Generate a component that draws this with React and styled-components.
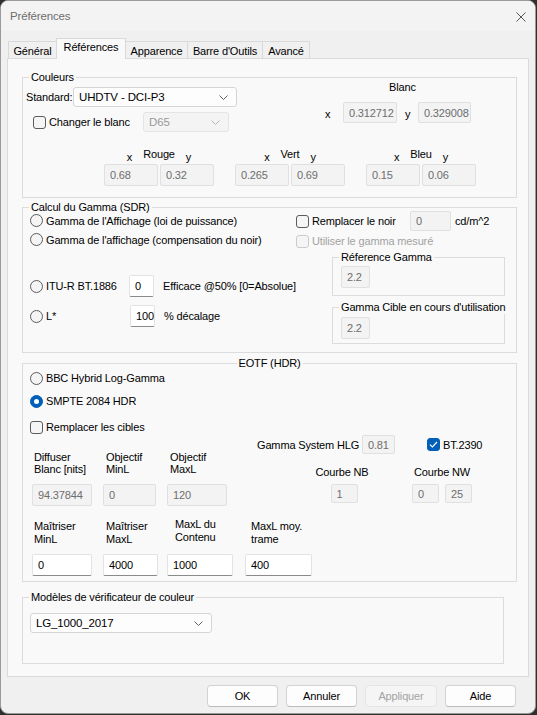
import React from 'react';
import styled, { createGlobalStyle, css } from 'styled-components';

const GlobalStyle = createGlobalStyle`
  html, body {
    margin: 0;
    padding: 0;
    background: #2f2f2f;
  }
  body {
    font-family: 'Liberation Sans', Arial, sans-serif;
    font-size: 11px;
    letter-spacing: -0.15px;
    color: #000;
  }
  * { box-sizing: border-box; }
`;

const Window = styled.div`
  width: 536px;
  height: 714px;
  background: #f0f0f0;
  border: 1px solid #9a9a9a;
  border-radius: 8px;
  overflow: hidden;
  display: flex;
  flex-direction: column;
`;

const TitleBar = styled.div`
  height: 30px;
  background: #f3f3f3;
  display: flex;
  align-items: center;
  justify-content: space-between;
  padding: 0 9px 0 9px;
`;

const Title = styled.span`
  font-size: 11.5px;
  color: #6e6e6e;
`;

const CloseBtn = styled.span`
  width: 10px;
  height: 10px;
  display: flex;
  margin-top: 1px;
`;

const TabStrip = styled.div`
  height: 27px;
  padding-left: 8px;
  display: flex;
  align-items: flex-end;
`;

const Tab = styled.div`
  width: ${p => p.$w}px;
  height: 17px;
  border: 1px solid #d9d9d9;
  border-bottom: none;
  margin-left: -1px;
  background: #f0f0f0;
  display: flex;
  align-items: center;
  justify-content: center;
  padding-top: 1px;
  ${p => p.$active && css`
    height: 21px;
    margin-bottom: -1px;
    background: #f9f9f9;
    position: relative;
    z-index: 2;
    padding-top: 0;
    padding-bottom: 4px;
  `}
`;

const Panel = styled.div`
  margin-left: 6px;
  width: 522px;
  height: 619px;
  background: #f9f9f9;
  border: 1px solid #dadada;
  padding: 18px 0 0 14px;
`;

const Group = styled.div`
  position: relative;
  width: ${p => p.$w || 495}px;
  height: ${p => p.$h}px;
  margin-top: ${p => p.$mt || 0}px;
  margin-left: ${p => p.$ml || 0}px;
  border: 1px solid #dcdcdc;
`;

const Legend = styled.span`
  position: absolute;
  top: -7px;
  left: 6px;
  padding: 0 2px;
  line-height: 13px;
  background: #f9f9f9;
  white-space: nowrap;
  ${p => p.$center && css`
    left: 50%;
    transform: translateX(-50%);
  `}
`;

const Row = styled.div`
  display: flex;
  align-items: center;
  height: ${p => p.$h || 20}px;
  margin-top: ${p => p.$mt || 0}px;
  padding-left: ${p => p.$pl || 0}px;
`;

const Text = styled.span`
  white-space: nowrap;
  margin-left: ${p => p.$ml || 0}px;
  ${p => p.$w && css`width: ${p.$w}px;`}
  color: ${p => (p.$disabled ? '#a2a2a2' : '#000')};
`;

const Field = styled.input`
  width: ${p => p.$w}px;
  height: ${p => p.$h || 22}px;
  margin: 0 0 0 ${p => p.$ml || 0}px;
  padding: 0 0 0 5px;
  font-family: inherit;
  font-size: 11px;
  letter-spacing: -0.15px;
  color: #000;
  background: #fff;
  border: 1px solid #e3e3e3;
  border-bottom-color: #8a8a8a;
  border-radius: 2px;
  outline: none;

  &:disabled {
    background: #f3f3f3;
    border-color: #e0e0e0;
    color: #6d6d6d;
  }
`;

const ComboBox = styled.div`
  width: ${p => p.$w}px;
  height: 20px;
  display: flex;
  align-items: center;
  justify-content: space-between;
  padding: 0 8px 0 5px;
  font-size: 11.5px;
  border: 1px solid #d5d5d5;
  border-radius: 3px;
  background: #fdfdfd;
  color: #000;
  ${p => p.$disabled && css`
    background: #f4f4f4;
    border-color: #e4e4e4;
    color: #9a9a9a;
  `}
`;

const Combo = ({ w, disabled, children }) => (
  <ComboBox $w={w} $disabled={disabled}>
    <span>{children}</span>
    <svg width="9" height="5" viewBox="0 0 9 5">
      <path d="M0.5 0.5 L4.5 4.5 L8.5 0.5" fill="none" stroke={disabled ? '#b5b5b5' : '#606060'} strokeWidth="1" />
    </svg>
  </ComboBox>
);

const Choice = styled.label`
  display: flex;
  align-items: center;
  gap: 3px;
  white-space: nowrap;
  ${p => p.$w && css`width: ${p.$w}px;`}
  color: ${p => (p.$disabled ? '#a2a2a2' : '#000')};
`;

const RadioDot = styled.span`
  width: 13px;
  height: 13px;
  border-radius: 50%;
  flex: none;
  border: 1px solid #5c5c5c;
  background: #f4f4f4;
  display: flex;
  align-items: center;
  justify-content: center;
  ${p => p.$checked && css`
    border-color: #005fb8;
    background: #005fb8;
    &::after {
      content: '';
      width: 5px;
      height: 5px;
      border-radius: 50%;
      background: #fff;
    }
  `}
`;

const CheckBox = styled.span`
  width: 13px;
  height: 13px;
  border-radius: 3px;
  flex: none;
  border: 1px solid ${p => (p.$disabled ? '#cbcbcb' : '#5c5c5c')};
  background: #f5f5f5;
  display: flex;
  align-items: center;
  justify-content: center;
  ${p => p.$checked && css`
    border-color: #005fb8;
    background: #005fb8;
  `}
`;

const Radio = ({ checked, w, children }) => (
  <Choice $w={w}>
    <RadioDot $checked={checked} />
    {children}
  </Choice>
);

const Check = ({ checked, disabled, w, children }) => (
  <Choice $w={w} $disabled={disabled}>
    <CheckBox $checked={checked} $disabled={disabled}>
      {checked && (
        <svg width="9" height="7" viewBox="0 0 9 7">
          <path d="M1 3.6 L3.4 6 L8 1" fill="none" stroke="#fff" strokeWidth="1.2" />
        </svg>
      )}
    </CheckBox>
    {children}
  </Choice>
);

/* Couleurs */
const ColorTop = styled.div`
  display: flex;
`;

const StdCol = styled.div`
  margin-left: 3px;
  padding-top: 9px;
  width: 211px;
`;

const BlancCol = styled.div`
  margin-left: 88px;
  padding-top: 3px;
`;

const BlancTitle = styled.div`
  padding-left: 64px;
  line-height: 12px;
`;

const Axis = styled.span`
  width: 6px;
  margin-left: ${p => p.$ml || 0}px;
  padding-top: 2px;
`;

const ColorRow = styled.div`
  display: flex;
  gap: 21px;
  margin-top: 18px;
  padding-left: 81px;
`;

const PairHead = styled.div`
  height: 14px;
  display: flex;
  justify-content: center;
  align-items: flex-end;
  gap: 11px;
  line-height: 13px;
`;

const PairName = styled.span`
  margin-bottom: 3px;
`;

const PairInputs = styled.div`
  display: flex;
  gap: 2px;
`;

/* Gamma */
const Columns = styled.div`
  display: flex;
`;

const GammaLeft = styled.div`
  width: 273px;
  padding: 3px 0 0 7px;
`;

const GammaRight = styled.div`
  padding-top: 3px;
`;

const InnerPad = styled.div`
  padding: ${p => p.$pt}px 0 0 8px;
`;

/* EOTF */
const EotfTop = styled.div`
  padding: 6px 0 0 7px;
`;

const TargetsBlock = styled.div`
  display: flex;
  padding: 16px 0 0 9px;
`;

const FieldCol = styled.div`
  display: flex;
  flex-direction: column;
  margin-left: ${p => p.$ml || 0}px;
`;

const TwoLine = styled.div`
  line-height: ${p => p.$lh}px;
  height: ${p => p.$lh * 2}px;
  padding-left: ${p => p.$lx}px;
  margin-top: ${p => p.$ly || 0}px;
  margin-bottom: ${p => p.$gap - (p.$ly || 0)}px;
  white-space: nowrap;
`;

const HdrRight = styled.div`
  margin-left: 30px;
`;

const CurveRow = styled.div`
  display: flex;
  margin-top: 12px;
`;

const CurveCol = styled.div`
  width: ${p => p.$w}px;
  margin-left: ${p => p.$ml}px;
  display: flex;
  flex-direction: column;
  align-items: center;
`;

const CurveLabel = styled.div`
  line-height: 13px;
  white-space: nowrap;
  margin-bottom: 5px;
`;

const CurveInputs = styled.div`
  display: flex;
  gap: 6px;
  padding-left: ${p => p.$pl || 0}px;
`;

const MasterRow = styled.div`
  display: flex;
  margin-top: 14px;
  padding-left: 9px;
`;

const ModelPad = styled.div`
  padding: 15px 0 0 7px;
`;

/* Buttons */
const ButtonBar = styled.div`
  display: flex;
  justify-content: flex-end;
  gap: 8px;
  margin-top: 8px;
  padding-right: 19px;
`;

const Button = styled.button`
  width: ${p => p.$w || 71}px;
  height: 22px;
  font-family: inherit;
  font-size: 11px;
  letter-spacing: -0.15px;
  color: #000;
  background: #fdfdfd;
  border: 1px solid #d2d2d2;
  border-bottom-color: #bcbcbc;
  border-radius: 4px;
  padding: 0;

  &:disabled {
    background: #f5f5f5;
    border-color: #e5e5e5;
    color: #a3a3a3;
  }
`;

const tabs = [
  { label: 'Général', w: 49 },
  { label: 'Références', w: 70, active: true },
  { label: 'Apparence', w: 63 },
  { label: "Barre d'Outils", w: 76 },
  { label: 'Avancé', w: 48 },
];

const colorPairs = [
  { name: 'Rouge', x: '0.68', y: '0.32' },
  { name: 'Vert', x: '0.265', y: '0.69' },
  { name: 'Bleu', x: '0.15', y: '0.06' },
];

const targets = [
  { l1: 'Diffuser', l2: 'Blanc [nits]', v: '94.37844', w: 60, ml: 0, lx: 2 },
  { l1: 'Objectif', l2: 'MinL', v: '0', w: 53, ml: 11, lx: 3 },
  { l1: 'Objectif', l2: 'MaxL', v: '120', w: 60, ml: 11, lx: 3 },
];

const masters = [
  { l1: 'Maîtriser', l2: 'MinL', v: '0', w: 60, ml: 0, lx: 2 },
  { l1: 'Maîtriser', l2: 'MaxL', v: '4000', w: 55, ml: 11, lx: 3 },
  { l1: 'MaxL du', l2: 'Contenu', v: '1000', w: 66, ml: 9, lx: 8, ly: -2 },
  { l1: 'MaxL moy.', l2: 'trame', v: '400', w: 67, ml: 12, lx: 6 },
];

const App = () => (
  <>
    <GlobalStyle />
    <Window>
      <TitleBar>
        <Title>Préférences</Title>
        <CloseBtn>
          <svg width="10" height="10" viewBox="0 0 10 10">
            <path d="M0.5 0.5 L9.5 9.5 M9.5 0.5 L0.5 9.5" stroke="#555" strokeWidth="1" />
          </svg>
        </CloseBtn>
      </TitleBar>

      <TabStrip>
        {tabs.map(t => (
          <Tab key={t.label} $w={t.w} $active={t.active}>{t.label}</Tab>
        ))}
      </TabStrip>

      <Panel>
        <Group $h={121}>
          <Legend>Couleurs</Legend>
          <ColorTop>
            <StdCol>
              <Row $h={20}>
                <Text $w={47}>Standard:</Text>
                <Combo w={164}>UHDTV - DCI-P3</Combo>
              </Row>
              <Row $h={20} $mt={5} $pl={7}>
                <Check w={110}>Changer le blanc</Check>
                <Combo w={86} disabled>D65</Combo>
              </Row>
            </StdCol>
            <BlancCol>
              <BlancTitle>Blanc</BlancTitle>
              <Row $h={21} $mt={9}>
                <Axis>x</Axis>
                <Field $w={54} $h={21} $ml={12} disabled defaultValue="0.312712" />
                <Axis $ml={8}>y</Axis>
                <Field $w={53} $h={21} $ml={7} disabled defaultValue="0.329008" />
              </Row>
            </BlancCol>
          </ColorTop>
          <ColorRow>
            {colorPairs.map(c => (
              <div key={c.name}>
                <PairHead>
                  <span>x</span>
                  <PairName>{c.name}</PairName>
                  <span>y</span>
                </PairHead>
                <PairInputs>
                  <Field $w={54} disabled defaultValue={c.x} />
                  <Field $w={54} disabled defaultValue={c.y} />
                </PairInputs>
              </div>
            ))}
          </ColorRow>
        </Group>

        <Group $h={146} $mt={9}>
          <Legend>Calcul du Gamma (SDR)</Legend>
          <Columns>
            <GammaLeft>
              <Row $h={19}><Radio>Gamma de l'Affichage (loi de puissance)</Radio></Row>
              <Row $h={19}><Radio>Gamma de l'affichage (compensation du noir)</Radio></Row>
              <Row $h={22} $mt={26}>
                <Radio w={100}>ITU-R BT.1886</Radio>
                <Field $w={25} defaultValue="0" />
                <Text $ml={9}>Efficace @50% [0=Absolue]</Text>
              </Row>
              <Row $h={22} $mt={8}>
                <Radio w={100}>L*</Radio>
                <Field $w={25} defaultValue="100" />
                <Text $ml={9}>% décalage</Text>
              </Row>
            </GammaLeft>
            <GammaRight>
              <Row $h={20}>
                <Check w={114}>Remplacer le noir</Check>
                <Field $w={41} $h={20} disabled defaultValue="0" />
                <Text $ml={4}>cd/m^2</Text>
              </Row>
              <Row $h={16} $mt={2}>
                <Check disabled>Utiliser le gamma mesuré</Check>
              </Row>
              <Group $w={173} $h={39} $mt={8} $ml={36}>
                <Legend>Réference Gamma</Legend>
                <InnerPad $pt={8}>
                  <Field $w={29} disabled defaultValue="2.2" />
                </InnerPad>
              </Group>
              <Group $w={173} $h={37} $mt={11} $ml={36}>
                <Legend>Gamma Cible en cours d'utilisation</Legend>
                <InnerPad $pt={9}>
                  <Field $w={29} disabled defaultValue="2.2" />
                </InnerPad>
              </Group>
            </GammaRight>
          </Columns>
        </Group>

        <Group $h={219} $mt={10}>
          <Legend $center>EOTF (HDR)</Legend>
          <EotfTop>
            <Row $h={16}><Radio>BBC Hybrid Log-Gamma</Radio></Row>
            <Row $h={16} $mt={7}><Radio checked>SMPTE 2084 HDR</Radio></Row>
            <Row $h={16} $mt={10}><Check>Remplacer les cibles</Check></Row>
          </EotfTop>
          <Columns>
            <TargetsBlock>
              {targets.map(t => (
                <FieldCol key={t.l1 + t.l2} $ml={t.ml}>
                  <TwoLine $lh={12} $lx={t.lx} $gap={9}>{t.l1}<br />{t.l2}</TwoLine>
                  <Field $w={t.w} disabled defaultValue={t.v} />
                </FieldCol>
              ))}
            </TargetsBlock>
            <HdrRight>
              <Row $h={19}>
                <Text $w={105}>Gamma System HLG</Text>
                <Field $w={33} $h={19} disabled defaultValue="0.81" />
                <Text $ml={32}><Check checked>BT.2390</Check></Text>
              </Row>
              <CurveRow>
                <CurveCol $w={52} $ml={59}>
                  <CurveLabel>Courbe NB</CurveLabel>
                  <CurveInputs $pl={4}>
                    <Field $w={27} $h={19} disabled defaultValue="1" />
                  </CurveInputs>
                </CurveCol>
                <CurveCol $w={60} $ml={44}>
                  <CurveLabel>Courbe NW</CurveLabel>
                  <CurveInputs>
                    <Field $w={27} $h={19} disabled defaultValue="0" />
                    <Field $w={27} $h={19} disabled defaultValue="25" />
                  </CurveInputs>
                </CurveCol>
              </CurveRow>
            </HdrRight>
          </Columns>
          <MasterRow>
            {masters.map(m => (
              <FieldCol key={m.l1 + m.l2} $ml={m.ml}>
                <TwoLine $lh={13} $lx={m.lx} $ly={m.ly} $gap={8}>{m.l1}<br />{m.l2}</TwoLine>
                <Field $w={m.w} defaultValue={m.v} />
              </FieldCol>
            ))}
          </MasterRow>
        </Group>

        <Group $w={482} $h={67} $mt={15}>
          <Legend>Modèles de vérificateur de couleur</Legend>
          <ModelPad>
            <Combo w={182}>LG_1000_2017</Combo>
          </ModelPad>
        </Group>
      </Panel>

      <ButtonBar>
        <Button>OK</Button>
        <Button>Annuler</Button>
        <Button $w={72} disabled>Appliquer</Button>
        <Button>Aide</Button>
      </ButtonBar>
    </Window>
  </>
);

export default App;
